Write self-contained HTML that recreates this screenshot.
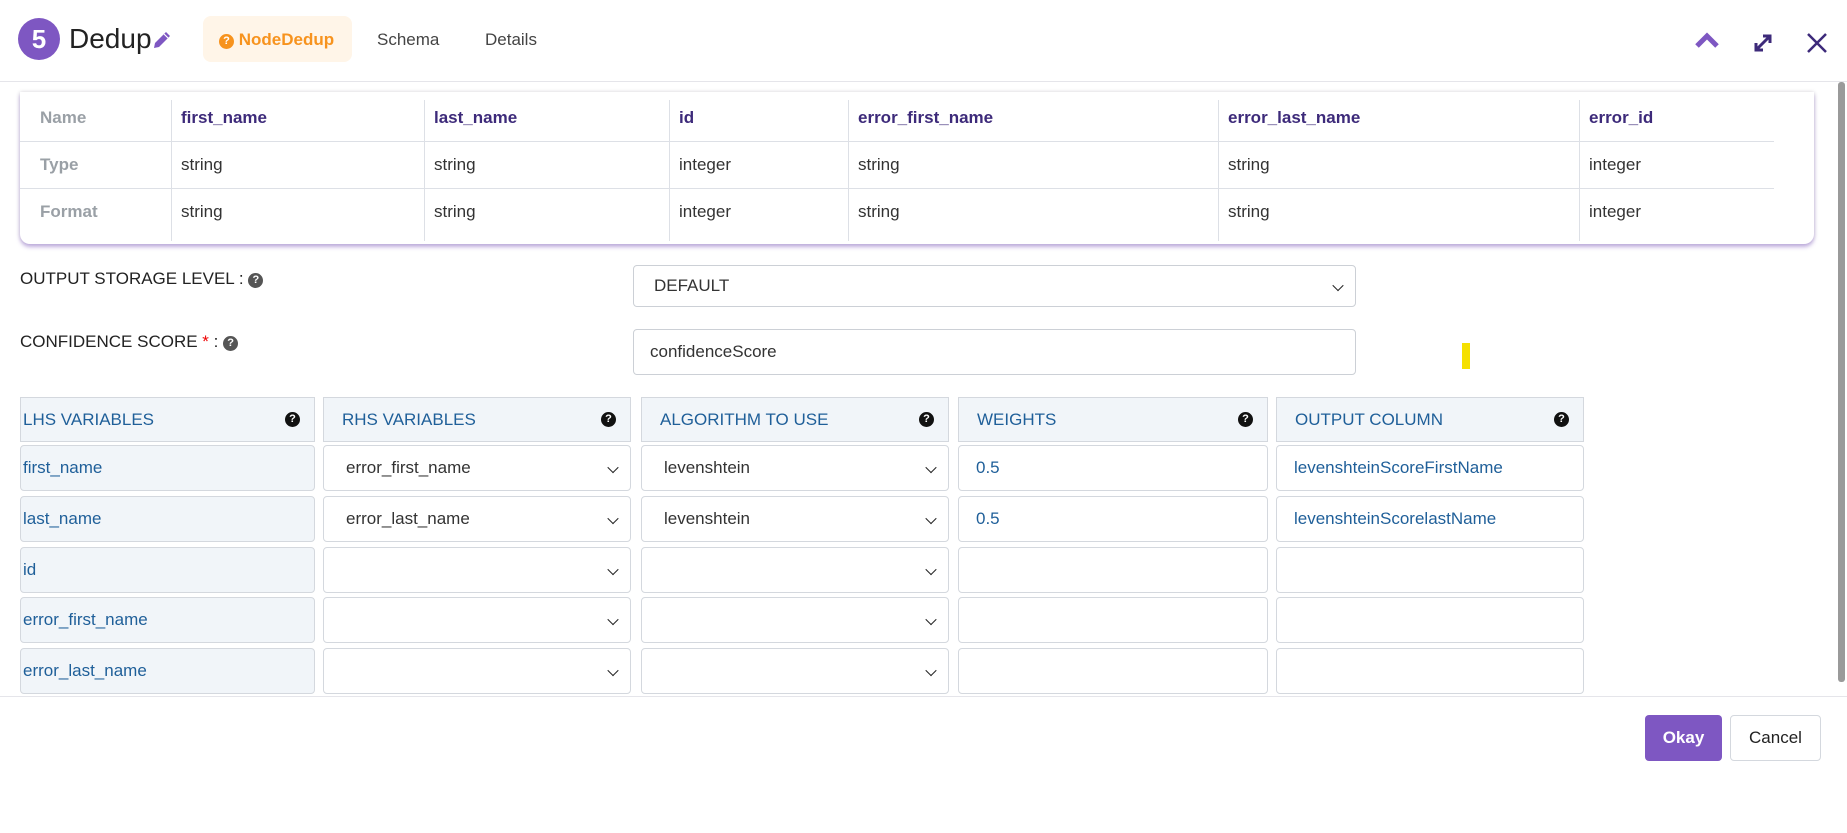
<!DOCTYPE html>
<html><head><meta charset="utf-8"><style>
*{box-sizing:border-box;margin:0;padding:0}
body{width:1847px;height:833px;background:#fff;font-family:"Liberation Sans",sans-serif;position:relative;overflow:hidden;color:#333}
.a{position:absolute}
.hdr{left:0;top:0;width:1847px;height:82px;border-bottom:1px solid #e5e5ea}
.badge{left:18px;top:18px;width:42px;height:42px;border-radius:50%;background:#7e57c2;color:#fff;font-size:26px;font-weight:bold;text-align:center;line-height:42px}
.title{left:69px;top:23px;font-size:28px;color:#222}
.tab{top:16px;height:46px;line-height:47px;font-size:17px;color:#444}
.card{left:20px;top:92px;width:1794px;height:152px;background:#fff;border-radius:0 0 10px 10px;box-shadow:0 3px 4px rgba(126,87,194,.45),0 0 4px rgba(0,0,0,.15)}
.cell{position:absolute;font-size:17px;line-height:47px;padding-left:10px}
.hl{position:absolute;height:1px;background:#dde0e6}
.vl{position:absolute;width:1px;background:#dde0e6;top:8px;height:141px}
.lbl{font-size:17px;color:#222;left:20px}
.q{display:inline-block;width:15px;height:15px;border-radius:50%;background:#555;color:#fff;font-size:11px;font-weight:bold;text-align:center;line-height:15px;vertical-align:1px}
.q2{background:#111}
.box{border:1px solid #ccd0d6;border-radius:4px;background:#fff;font-size:17px;color:#333;padding-left:20px}
.gh{background:#f1f5f9;border:1px solid #d4d8de;color:#1f5f99;font-size:17px;padding-left:0}
.gc{border:1px solid #d4d8de;border-radius:4px;font-size:17px;color:#1f5f99}
.chev{position:absolute;right:13px;top:50%;width:8px;height:8px;border-right:1.6px solid #222;border-bottom:1.6px solid #222;transform:translateY(-55%) rotate(45deg)}
</style></head><body>
<div class="a hdr"></div>
<div class="a badge">5</div>
<div class="a title">Dedup</div>
<svg class="a" style="left:151px;top:29px" width="22" height="22" viewBox="0 0 22 22"><path d="M3 19 L4 14 L15 3 L19 7 L8 18 Z" fill="#7e57c2"/><path d="M13 5 L17 9" stroke="#fff" stroke-width="1.2"/></svg>
<div class="a tab" style="left:203px;width:149px;background:#fff5e8;border-radius:8px;color:#f7931e;font-weight:bold;padding-left:16px"><span class="q" style="background:#f7931e">?</span> NodeDedup</div>
<div class="a tab" style="left:377px">Schema</div>
<div class="a tab" style="left:485px">Details</div>
<svg class="a" style="left:1694px;top:32px" width="26" height="18" viewBox="0 0 26 18"><path d="M3 14 L13 4 L23 14" stroke="#7e57c2" stroke-width="5" fill="none"/></svg>
<svg class="a" style="left:1752px;top:32px" width="22" height="22" viewBox="0 0 22 22"><path d="M4 18 L18 4 M11 4 H18 V11 M4 11 V18 H11" stroke="#3d2a7a" stroke-width="3" fill="none"/></svg>
<svg class="a" style="left:1806px;top:32px" width="22" height="22" viewBox="0 0 22 22"><path d="M2 2 L20 20 M20 2 L2 20" stroke="#3d2a7a" stroke-width="2.5"/></svg>

<div class="a card">
<div class="hl" style="left:0;top:49px;width:1754px"></div>
<div class="hl" style="left:0;top:96px;width:1754px"></div>
<div class="vl" style="left:151px"></div><div class="vl" style="left:404px"></div><div class="vl" style="left:649px"></div><div class="vl" style="left:828px"></div><div class="vl" style="left:1198px"></div><div class="vl" style="left:1559px"></div>
<div class="cell" style="left:10px;top:2px;color:#9aa0a6;font-weight:bold">Name</div>
<div class="cell" style="left:10px;top:49px;color:#9aa0a6;font-weight:bold">Type</div>
<div class="cell" style="left:10px;top:96px;color:#9aa0a6;font-weight:bold">Format</div>
<div class="cell" style="left:151px;top:2px;color:#3d2a7a;font-weight:bold">first_name</div>
<div class="cell" style="left:404px;top:2px;color:#3d2a7a;font-weight:bold">last_name</div>
<div class="cell" style="left:649px;top:2px;color:#3d2a7a;font-weight:bold">id</div>
<div class="cell" style="left:828px;top:2px;color:#3d2a7a;font-weight:bold">error_first_name</div>
<div class="cell" style="left:1198px;top:2px;color:#3d2a7a;font-weight:bold">error_last_name</div>
<div class="cell" style="left:1559px;top:2px;color:#3d2a7a;font-weight:bold">error_id</div>
<div class="cell" style="left:151px;top:49px">string</div><div class="cell" style="left:404px;top:49px">string</div><div class="cell" style="left:649px;top:49px">integer</div><div class="cell" style="left:828px;top:49px">string</div><div class="cell" style="left:1198px;top:49px">string</div><div class="cell" style="left:1559px;top:49px">integer</div>
<div class="cell" style="left:151px;top:96px">string</div><div class="cell" style="left:404px;top:96px">string</div><div class="cell" style="left:649px;top:96px">integer</div><div class="cell" style="left:828px;top:96px">string</div><div class="cell" style="left:1198px;top:96px">string</div><div class="cell" style="left:1559px;top:96px">integer</div>
</div>

<div class="a lbl" style="top:269px">OUTPUT STORAGE LEVEL : <span class="q">?</span></div>
<div class="a box" style="left:633px;top:265px;width:723px;height:42px;line-height:40px">DEFAULT<span class="chev"></span></div>
<div class="a lbl" style="top:332px">CONFIDENCE SCORE <span style="color:#e00">*</span> : <span class="q">?</span></div>
<div class="a box" style="left:633px;top:329px;width:723px;height:46px;line-height:44px;padding-left:16px">confidenceScore</div>
<div class="a" style="left:1462px;top:343px;width:8px;height:26px;background:#f5e000"></div>

<div class="a" style="left:0;top:83px;width:1837px;height:613px;overflow:hidden">
<div style="position:absolute;left:0;top:-83px">
<div class="a box gh" style="left:20px;top:397px;width:295px;height:45px;line-height:43px;border-radius:0;padding-left:2px">LHS VARIABLES<span class="q q2" style="position:absolute;right:14px;top:14px">?</span></div>
<div class="a box gh" style="left:323px;top:397px;width:308px;height:45px;line-height:43px;border-radius:0;padding-left:18px">RHS VARIABLES<span class="q q2" style="position:absolute;right:14px;top:14px">?</span></div>
<div class="a box gh" style="left:641px;top:397px;width:308px;height:45px;line-height:43px;border-radius:0;padding-left:18px">ALGORITHM TO USE<span class="q q2" style="position:absolute;right:14px;top:14px">?</span></div>
<div class="a box gh" style="left:958px;top:397px;width:310px;height:45px;line-height:43px;border-radius:0;padding-left:18px">WEIGHTS<span class="q q2" style="position:absolute;right:14px;top:14px">?</span></div>
<div class="a box gh" style="left:1276px;top:397px;width:308px;height:45px;line-height:43px;border-radius:0;padding-left:18px">OUTPUT COLUMN<span class="q q2" style="position:absolute;right:14px;top:14px">?</span></div>

<div class="a gc" style="left:20px;top:445px;width:295px;height:46px;line-height:44px;background:#f1f5f9;padding-left:2px">first_name</div>
<div class="a gc" style="left:20px;top:496px;width:295px;height:46px;line-height:44px;background:#f1f5f9;padding-left:2px">last_name</div>
<div class="a gc" style="left:20px;top:547px;width:295px;height:46px;line-height:44px;background:#f1f5f9;padding-left:2px">id</div>
<div class="a gc" style="left:20px;top:597px;width:295px;height:46px;line-height:44px;background:#f1f5f9;padding-left:2px">error_first_name</div>
<div class="a gc" style="left:20px;top:648px;width:295px;height:46px;line-height:44px;background:#f1f5f9;padding-left:2px">error_last_name</div>

<div class="a gc" style="left:323px;top:445px;width:308px;height:46px;line-height:44px;color:#333;padding-left:22px">error_first_name<span class="chev"></span></div>
<div class="a gc" style="left:323px;top:496px;width:308px;height:46px;line-height:44px;color:#333;padding-left:22px">error_last_name<span class="chev"></span></div>
<div class="a gc" style="left:323px;top:547px;width:308px;height:46px"><span class="chev"></span></div>
<div class="a gc" style="left:323px;top:597px;width:308px;height:46px"><span class="chev"></span></div>
<div class="a gc" style="left:323px;top:648px;width:308px;height:46px"><span class="chev"></span></div>

<div class="a gc" style="left:641px;top:445px;width:308px;height:46px;line-height:44px;color:#333;padding-left:22px">levenshtein<span class="chev"></span></div>
<div class="a gc" style="left:641px;top:496px;width:308px;height:46px;line-height:44px;color:#333;padding-left:22px">levenshtein<span class="chev"></span></div>
<div class="a gc" style="left:641px;top:547px;width:308px;height:46px"><span class="chev"></span></div>
<div class="a gc" style="left:641px;top:597px;width:308px;height:46px"><span class="chev"></span></div>
<div class="a gc" style="left:641px;top:648px;width:308px;height:46px"><span class="chev"></span></div>

<div class="a gc" style="left:958px;top:445px;width:310px;height:46px;line-height:44px;padding-left:17px">0.5</div>
<div class="a gc" style="left:958px;top:496px;width:310px;height:46px;line-height:44px;padding-left:17px">0.5</div>
<div class="a gc" style="left:958px;top:547px;width:310px;height:46px"></div>
<div class="a gc" style="left:958px;top:597px;width:310px;height:46px"></div>
<div class="a gc" style="left:958px;top:648px;width:310px;height:46px"></div>

<div class="a gc" style="left:1276px;top:445px;width:308px;height:46px;line-height:44px;padding-left:17px">levenshteinScoreFirstName</div>
<div class="a gc" style="left:1276px;top:496px;width:308px;height:46px;line-height:44px;padding-left:17px">levenshteinScorelastName</div>
<div class="a gc" style="left:1276px;top:547px;width:308px;height:46px"></div>
<div class="a gc" style="left:1276px;top:597px;width:308px;height:46px"></div>
<div class="a gc" style="left:1276px;top:648px;width:308px;height:46px"></div>
</div></div>

<div class="a" style="left:1838px;top:82px;width:7px;height:600px;background:#9a9a9a;border-radius:3px"></div>
<div class="a" style="left:0;top:696px;width:1847px;height:1px;background:#e5e5ea"></div>
<div class="a" style="left:1645px;top:715px;width:77px;height:46px;background:#7e57c2;border-radius:4px;color:#fff;font-weight:bold;font-size:17px;text-align:center;line-height:46px">Okay</div>
<div class="a" style="left:1730px;top:715px;width:91px;height:46px;border:1px solid #d4d8de;border-radius:4px;color:#222;font-size:17px;text-align:center;line-height:44px">Cancel</div>
</body></html>
